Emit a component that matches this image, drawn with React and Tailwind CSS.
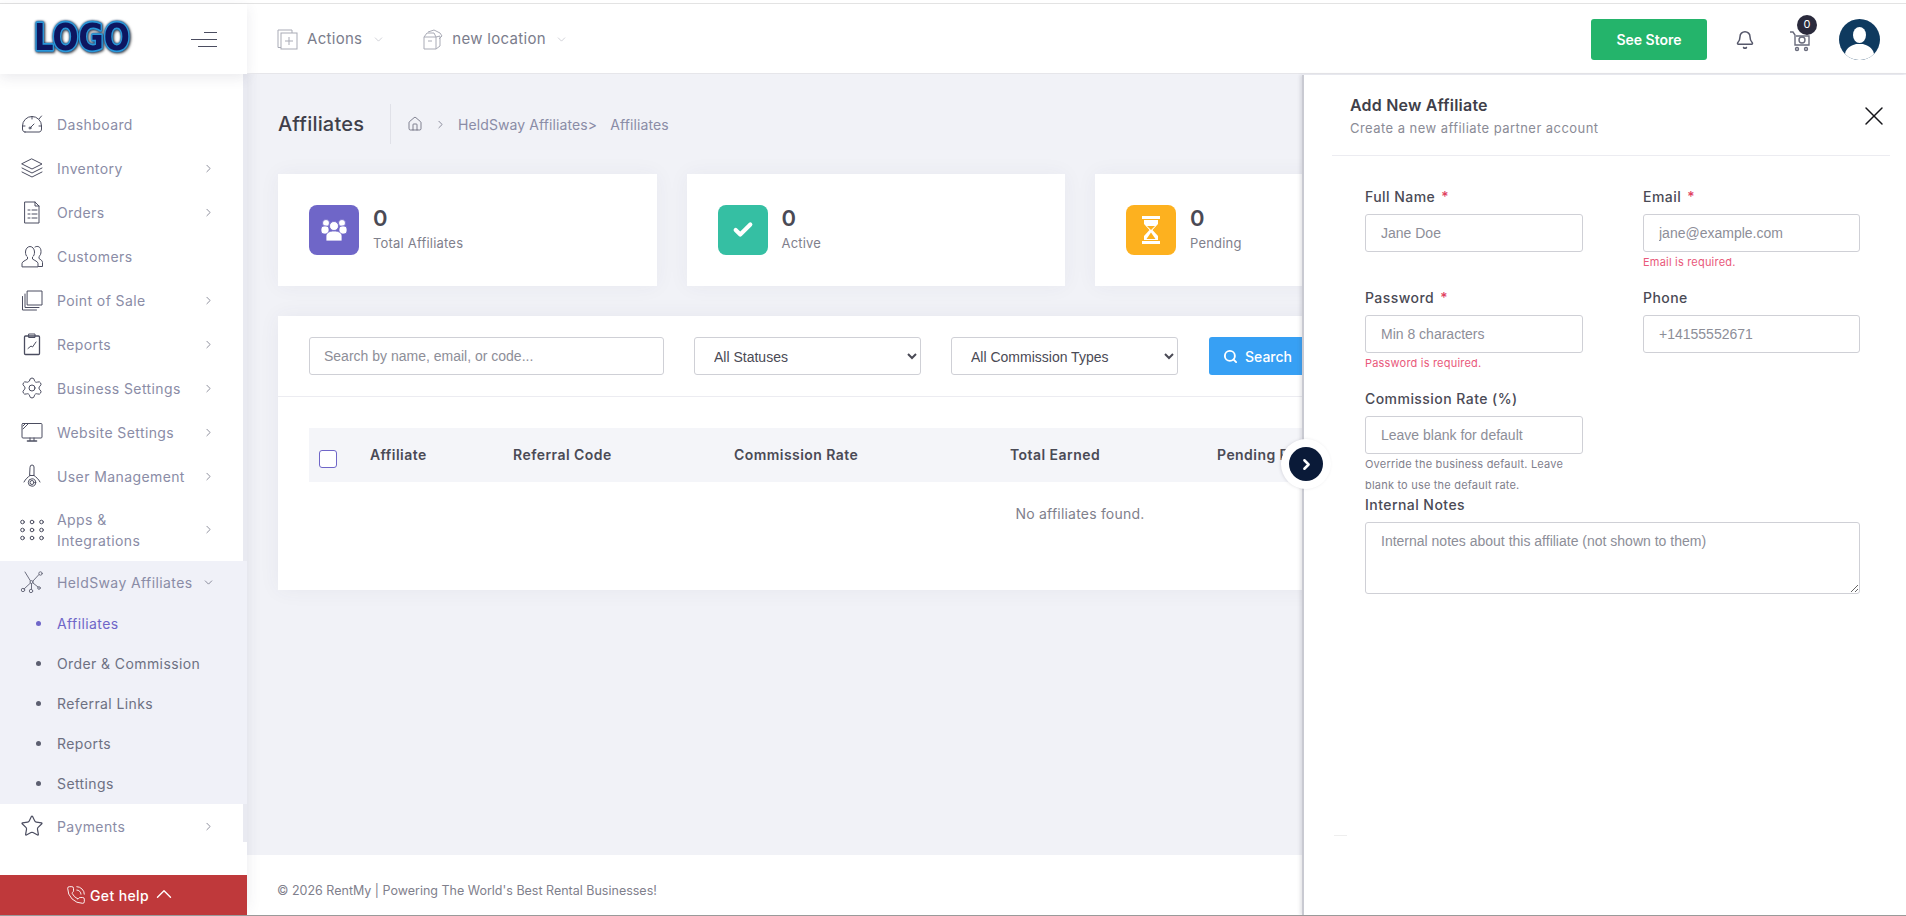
import React from "react";
import { ChevronRight, ChevronDown, ChevronUp, Bell, Search, Settings, Star, X, Home, Check, PhoneCall } from "lucide-react";

const Ic = ({ children, className = "" }) => (
  <svg viewBox="0 0 24 24" fill="none" stroke="currentColor" strokeWidth="1" strokeLinejoin="round" strokeLinecap="round" className={"w-[24px] h-[24px] text-[#4b4d60] " + className}>
    {children}
  </svg>
);

const icons = {
  gauge: <Ic><path d="M5 20h14c1.5 0 2.5-1.2 2.5-3v-3A9.5 9.5 0 0 0 2.5 14v3c0 1.800 1 3 2.500 3z" /><path d="M10.500 15.500l3.500-3.500" /><circle cx="10" cy="16" r="1" /><path d="M19 7l2.500-3M2.500 14H5M19 14h2.500M12 4.500V7" /></Ic>,
  layers: <Ic><path d="M12 3l10 5-10 5L2 8z" /><path d="M2 12l10 5 10-5" /><path d="M2 16l10 5 10-5" /></Ic>,
  doc: <Ic><path d="M5 2h10l4 4v17H5z" /><path d="M15 2v4h4" /><path d="M8 10h2M12 10h5M8 14h2M12 14h5M8 18h2M12 18h5" /></Ic>,
  users: <Ic><path d="M2 22.500v-3c0-2 3.500-3 5.500-4.500v-2c-1.500-1-2-3-2-5 0-3 2-5.500 4.500-5.500s4.500 2.500 4.500 5.500c0 2-.5 4-2 5v2c2 1.500 5.500 2.500 5.500 4.500v3z" /><path d="M15 3c2.500-1.500 6-.5 6 4.500 0 2-.5 4-2 5v2c1.500 1 3.500 2 3.500 4v4h-4" /></Ic>,
  stack: <Ic><path d="M7.500 3H22v14H7.500z" /><path d="M5 6v13.500h14" /><path d="M2.500 8.500V22h14" /></Ic>,
  report: <Ic><rect x="4.500" y="4" width="15" height="18.500" rx="1" strokeWidth="1.300" /><path d="M9 2h6v3.500H9z" /><path d="M8 16.500l3-2.500 1.500 1 3.500-5" /></Ic>,
  gear: <Settings size={24} strokeWidth={1} className="text-[#4b4d60]" />,
  monitor: <Ic><rect x="2" y="3.500" width="20" height="14.500" rx="1" /><path d="M3 9l5-5M3 6l2-2" /><path d="M10 18v2.500M14 18v2.500" /><path d="M7.500 21h9" strokeWidth="1.600" /></Ic>,
  usergear: <Ic><path d="M10 3a2 2 0 0 1 4 0v8.500h-4z" /><circle cx="12" cy="18.500" r="2" /><circle cx="12" cy="18.500" r="3.700" /><path d="M4 18c1.500-3 4-5 6-6.500M20 18c-1.500-3-4-5-6-6.500" /></Ic>,
  grid: <Ic>{[4, 12, 20].map((y) => [2.500, 12, 21.500].map((x) => <circle key={x + "-" + y} cx={x} cy={y} r="1.800" />))}</Ic>,
  network: <Ic className="!text-[#6d6f80]"><circle cx="11.500" cy="12" r="1.500" /><circle cx="20.500" cy="3.500" r="1.700" /><circle cx="3" cy="20" r="1.700" /><circle cx="11" cy="21" r="1.700" /><circle cx="19" cy="18" r="1.300" /><path d="M5 2l5.500 9M13 11l6-6.500M10.500 13l-6.500 6M11.500 13.500v6M13 13l5 4" /></Ic>,
  star: <Star size={24} strokeWidth={1.200} className="text-[#4b4d60]" />,
};

const nav = [
  { label: "Dashboard", icon: "gauge" },
  { label: "Inventory", icon: "layers", more: true },
  { label: "Orders", icon: "doc", more: true },
  { label: "Customers", icon: "users" },
  { label: "Point of Sale", icon: "stack", more: true },
  { label: "Reports", icon: "report", more: true },
  { label: "Business Settings", icon: "gear", more: true },
  { label: "Website Settings", icon: "monitor", more: true },
  { label: "User Management", icon: "usergear", more: true },
];

const subNav = ["Affiliates", "Order & Commission", "Referral Links", "Reports", "Settings"];

function NavRow({ item }) {
  return (
    <div className="flex items-center h-[44px] pl-[20px] pr-[32px] relative">
      <span className="w-[37px] shrink-0 flex">{icons[item.icon]}</span>
      <span className="flex-1 text-[#8a8ca6]">{item.label}</span>
      {item.more && <ChevronRight size={13} strokeWidth={1.200} className="text-[#55576a]" />}
    </div>
  );
}

function Sidebar() {
  return (
    <aside className="w-[247px] shrink-0 h-full flex flex-col bg-white relative z-10 text-[14px] tracking-[0.4px] shadow-[0_-6px_14px_rgba(60,60,90,0.10)]">
      <div className="h-[768px] shrink-0 overflow-hidden pt-[28px] relative">
        <div className="absolute top-0 right-0 bottom-0 w-[4px] bg-[#e9eaf1]" />
        {nav.map((item) => (
          <NavRow key={item.label} item={item} />
        ))}
        <div className="flex items-center h-[63px] pl-[20px] pr-[32px] relative">
          <span className="w-[37px] shrink-0 flex">{icons.grid}</span>
          <span className="flex-1 text-[#8a8ca6] leading-[21px]">Apps &<br />Integrations</span>
          <ChevronRight size={13} strokeWidth={1.200} className="text-[#55576a]" />
        </div>
        <div className="bg-[#f0f1f8] h-[243px] relative">
          <div className="flex items-center h-[42px] pl-[20px] pr-[32px]">
            <span className="w-[37px] shrink-0 flex">{icons.network}</span>
            <span className="flex-1 text-[#8a8ca6] whitespace-nowrap">HeldSway Affiliates</span>
            <ChevronDown size={13} strokeWidth={1.200} className="text-[#55576a]" />
          </div>
          {subNav.map((s, i) => (
            <div key={s} className="flex items-center h-[40px] pl-[36px]">
              <span className={"w-[5px] h-[5px] rounded-full mr-[16px] " + (i === 0 ? "bg-[#6f66c8]" : "bg-[#5c5f70]")} />
              <span className={i === 0 ? "text-[#6f66c8]" : "text-[#6d7082]"}>{s}</span>
            </div>
          ))}
        </div>
        <NavRow item={{ label: "Payments", icon: "star", more: true }} />
      </div>
      <div className="h-[33px] shrink-0 bg-white" />
      <div className="h-[40px] shrink-0 bg-[#bf393b] flex items-center justify-center pr-[4px] text-white font-medium">
        <PhoneCall size={20} strokeWidth={1.100} className="mr-[4px]" />
        <span>Get help</span>
        <ChevronUp size={26} strokeWidth={1.300} className="ml-[2px] mb-[3px]" />
      </div>
    </aside>
  );
}

function Header() {
  return (
    <header className="h-[70px] shrink-0 flex items-center bg-white relative z-20">
      <div className="w-[247px] shrink-0 h-full flex items-center justify-between pl-[33px] pr-[30px] shadow-[0_4px_12px_rgba(60,60,90,0.10)]">
        <svg viewBox="0 0 98 36" className="w-[98px] h-[36px] mb-[4px] overflow-visible">
          <text x="1" y="31" textLength="96" lengthAdjust="spacingAndGlyphs" className="font-['DejaVu_Sans',sans-serif] font-bold text-[38px] [paint-order:stroke] [filter:drop-shadow(0_0_1px_#07336b)_drop-shadow(1px_1px_1px_#666)]" fill="#0d1660" stroke="#2a97d8" strokeWidth="3.400" strokeLinejoin="round">
            LOGO
          </text>
        </svg>
        <svg width="26" height="15" viewBox="0 0 26 15" fill="none" stroke="#4b4d60" strokeWidth="1">
          <path d="M13 .5h13M0 7.500h26M7 14.500h19" />
        </svg>
      </div>
      <div className="flex-1 h-full flex items-center justify-between pl-[30px] pr-[26px] pt-[2px] border-b border-[#e6e6ea]">
        <div className="flex items-center text-[15px] tracking-[0.3px] text-[#7b7d8c]">
          <svg width="21" height="21" viewBox="0 0 21 21" fill="none" stroke="#a9abb6" strokeWidth="1" className="mr-[9px]">
            <path d="M4 18.500H1V1h14v3" />
            <rect x="4" y="4" width="16" height="16" />
            <path d="M12 8v8M8 12h8" />
          </svg>
          <span>Actions</span>
          <ChevronDown size={13} strokeWidth={1} className="ml-[10px] text-[#a9abb6]" />
          <svg width="21" height="21" viewBox="0 0 21 21" fill="none" stroke="#a9abb6" strokeWidth="1" className="ml-[37px] mr-[9px]">
            <path d="M2 8h12v12H2z" />
            <path d="M14 20l4-3V7l-4 1M2 8l3-4h7l2 4" />
            <path d="M6 3l6-2 6 3 2 3-3 3M6 12h4" />
          </svg>
          <span>new location</span>
          <ChevronDown size={13} strokeWidth={1} className="ml-[9px] text-[#a9abb6]" />
        </div>
        <div className="flex items-center">
          <button className="w-[116px] h-[41px] rounded-[3px] bg-[#24b46b] text-white text-[14px] font-semibold">See Store</button>
          <Bell size={20} strokeWidth={1.800} className="ml-[28px] text-[#55576a]" />
          <div className="relative ml-[34px] w-[22px] h-[22px] mt-[2px]">
            <svg width="24" height="22" viewBox="0 0 24 22" fill="none" stroke="#6a6c7c" strokeWidth="1.400">
              <path d="M1 2h3l2 3v10h14V6H7" />
              <circle cx="8" cy="19" r="1.500" />
              <circle cx="17" cy="19" r="1.500" />
              <circle cx="13" cy="10" r="3" />
            </svg>
            <span className="absolute -top-[15px] left-[8px] w-[20px] h-[20px] rounded-full bg-[#2a2a3c] text-white text-[11px] flex items-center justify-center">0</span>
          </div>
          <svg width="41" height="41" viewBox="0 0 41 41" className="ml-[28px]">
            <circle cx="20.500" cy="20.500" r="20.500" fill="#0f3a5f" />
            <ellipse cx="20.500" cy="16" rx="6.500" ry="8" fill="#fff" />
            <path d="M6 35c1-7 8-9 11-10h7c3 1 10 3 11 10a20.500 20.500 0 0 1-29 0z" fill="#fff" />
          </svg>
        </div>
      </div>
    </header>
  );
}

function StatCard({ color, icon, label }) {
  return (
    <div className="bg-white h-[112px] flex items-center pl-[31px] shadow-[0_0_20px_rgba(60,60,100,0.05)]">
      <div className={"w-[50px] h-[50px] rounded-[8px] flex items-center justify-center text-white " + color}>{icon}</div>
      <div className="ml-[14px] mt-[-4px]">
        <div className="text-[22px] font-semibold leading-[30px] text-[#4a4a55]">0</div>
        <div className="text-[13px] leading-[20px] tracking-[0.2px] text-[#7f808c]">{label}</div>
      </div>
    </div>
  );
}

const GroupIcon = (
  <svg width="30" height="26" viewBox="0 0 30 26" fill="#fff" stroke="#6f66c8" strokeWidth="0.800">
    <circle cx="7" cy="6" r="3.500" />
    <circle cx="23" cy="6" r="3.500" />
    <rect x="2" y="9" width="8" height="8" rx="3" />
    <rect x="20" y="9" width="8" height="8" rx="3" />
    <circle cx="15" cy="9" r="4.500" />
    <path d="M7 24v-5c0-3 3-5 8-5s8 2 8 5v5z" />
  </svg>
);

const HourglassIcon = (
  <svg width="20" height="28" viewBox="0 0 20 28">
    <path d="M1 0h18v3H1zM1 25h18v3H1z" fill="#fff" />
    <path d="M3 4h14v4l-5.500 6 5.500 6v4H3v-4l5.500-6L3 8z" fill="#fff" />
    <path d="M6 10h8l-4 4zM10 16.500l4.500 6.500h-9z" fill="#fdb11f" />
  </svg>
);

function Main() {
  const head = [
    ["w-[143px]", "Affiliate"],
    ["w-[221px]", "Referral Code"],
    ["w-[276px]", "Commission Rate"],
    ["w-[207px]", "Total Earned"],
    ["w-[200px]", "Pending Payout"],
  ];
  return (
    <main className="flex-1 min-w-0 h-full flex flex-col bg-[#f1f2f7]">
      <div className="flex-1 pl-[31px] pr-[24px] pt-[30px] overflow-hidden">
        <div className="flex items-center h-[40px] mb-[30px]">
          <h1 className="text-[20px] font-medium tracking-[0.2px] text-[#3f3f4a] w-[112px]">Affiliates</h1>
          <div className="h-[40px] border-l border-[#e0e1e8] pl-[16px] flex items-center text-[14px] tracking-[0.1px] text-[#8a8ca6]">
            <Home size={16} strokeWidth={1.100} className="text-[#55576a]" />
            <ChevronRight size={13} strokeWidth={1.200} className="mx-[11px] text-[#55576a]" />
            <span>HeldSway Affiliates&gt;</span>
            <span className="ml-[13px]">Affiliates</span>
          </div>
        </div>
        <div className="grid grid-cols-4 gap-x-[30px]">
          <StatCard color="bg-[#6f66c8]" icon={GroupIcon} label="Total Affiliates" />
          <StatCard color="bg-[#35bfa3]" icon={<Check size={22} strokeWidth={4.500} />} label="Active" />
          <StatCard color="bg-[#fdb11f]" icon={HourglassIcon} label="Pending" />
          <StatCard color="bg-[#3b9ff2]" icon={<Check size={24} />} label="Paid" />
        </div>
        <div className="bg-white mt-[30px] h-[274px] shadow-[0_0_20px_rgba(60,60,100,0.06)]">
          <div className="flex items-center gap-x-[30px] h-[81px] pl-[31px] border-b border-[#ececf1] font-['Liberation_Sans',Arial,sans-serif] text-[14px]">
            <input placeholder="Search by name, email, or code..." className="w-[355px] h-[38px] px-[14px] border border-[#cfd0d6] rounded-[3px] placeholder:text-[#8d8e98]" />
            <select className="w-[227px] h-[38px] pl-[15px] pr-[4px] pt-[1px] border border-[#cfd0d6] rounded-[3px] text-[#4a4a55]">
              <option>All Statuses</option>
            </select>
            <select className="w-[227px] h-[38px] pl-[15px] pr-[4px] pt-[1px] border border-[#cfd0d6] rounded-[3px] text-[#4a4a55]">
              <option>All Commission Types</option>
            </select>
            <button className="w-[110px] h-[38px] ml-[1px] pl-[14px] rounded-[3px] bg-[#37a0f4] text-white font-['Inter',sans-serif] font-medium flex items-center">
              <Search size={15} strokeWidth={3} />
              <span className="ml-[7px]">Search</span>
            </button>
          </div>
          <div className="mx-[31px] mt-[31px] text-center">
            <div className="flex h-[54px] bg-[#f4f5f9] text-[14px] font-semibold tracking-[0.45px] text-[#4a4a55] pl-[61px] pb-[2px] items-center text-left relative">
              <input type="checkbox" className="appearance-none absolute left-[10px] top-[22px] w-[18px] h-[18px] rounded-[3px] border border-[#6f66c8] bg-white" />
              {head.map(([w, t]) => (
                <span key={t} className={w}>{t}</span>
              ))}
            </div>
            <p className="mt-[21px] text-[14px] tracking-[0.2px] text-[#7f808c]">No affiliates found.</p>
          </div>
        </div>
      </div>
      <footer className="h-[60px] shrink-0 bg-white pl-[30px] pt-[12px] flex items-center text-[12.5px] text-[#7f808c]">
        © 2026 RentMy | Powering The World's Best Rental Businesses!
      </footer>
    </main>
  );
}

function Field({ label, required, placeholder, error, help }) {
  return (
    <div>
      <label className="block h-[21px] leading-[21px] mb-[7px] text-[14px] font-medium tracking-[0.45px] text-[#4a4a55]">
        {label}
        {required && <span className="text-[#e0405f] ml-[6px]">*</span>}
      </label>
      <input placeholder={placeholder} className="w-full h-[38px] px-[15px] border border-[#cfd0d6] rounded-[3px] font-['Liberation_Sans',Arial,sans-serif] text-[14px] placeholder:text-[#8d8e98]" />
      {error && <p className="text-[11px] leading-[21px] tracking-[0.2px] text-[#e9597b]">{error}</p>}
      {help && <p className="text-[11px] leading-[21px] tracking-[0.2px] text-[#7f808c]">{help}</p>}
    </div>
  );
}

function Drawer() {
  return (
    <div className="absolute top-[75px] bottom-[1px] left-[1302px] right-0 z-30 bg-white border-l-[2px] border-[#c9cad2] shadow-[-2px_0_3px_rgba(80,80,100,0.15)]">
      <button className="absolute left-[-23px] top-[364px] w-[50px] h-[50px] rounded-full bg-white flex items-center justify-center shadow-[-1px_0_3px_rgba(80,80,100,0.15)]">
        <span className="w-[34px] h-[34px] rounded-full bg-[#0a1a38] text-white flex items-center justify-center">
          <ChevronRight size={17} strokeWidth={3.500} />
        </span>
      </button>
      <div className="ml-[28px] mr-[16px] h-[81px] border-b border-[#ececf1] pl-[18px] pr-[8px] pt-[18px] flex justify-between">
        <div>
          <h2 className="text-[16px] font-semibold leading-[24px] tracking-[0.2px] text-[#3f3f4a]">Add New Affiliate</h2>
          <p className="text-[13px] leading-[20px] mt-[1px] tracking-[0.45px] text-[#8a8b96]">Create a new affiliate partner account</p>
        </div>
        <X size={32} strokeWidth={1.100} className="mt-[7px] -mr-[8px] text-[#15151a]" />
      </div>
      <div className="pl-[61px] pr-[46px] pt-[30px]">
        <div className="grid grid-cols-[218px_217px] gap-x-[60px] gap-y-[14px]">
          <Field label="Full Name" required placeholder="Jane Doe" />
          <Field label="Email" required placeholder="jane@example.com" error="Email is required." />
          <Field label="Password" required placeholder="Min 8 characters" error="Password is required." />
          <Field label="Phone" placeholder="+14155552671" />
          <Field label="Commission Rate (%)" placeholder="Leave blank for default" help="Override the business default. Leave blank to use the default rate." />
        </div>
        <label className="block h-[21px] leading-[21px] -mt-[2px] mb-[7px] text-[14px] font-medium tracking-[0.45px] text-[#4a4a55]">Internal Notes</label>
        <textarea placeholder="Internal notes about this affiliate (not shown to them)" className="block w-[495px] h-[72px] px-[15px] py-[8px] border border-[#cfd0d6] rounded-[3px] font-['Liberation_Sans',Arial,sans-serif] text-[14px] placeholder:text-[#8d8e98]" />
      </div>
      <div className="absolute left-[30px] top-[760px] w-[13px] h-px bg-[#eeeeee]" />
    </div>
  );
}

export default function App() {
  return (
    <div className="h-screen w-full relative overflow-hidden flex flex-col bg-white font-['Inter',sans-serif]">
      <div className="h-[4px] shrink-0 border-b border-[#e3e3e3]" />
      <Header />
      <div className="flex-1 min-h-0 flex">
        <Sidebar />
        <Main />
      </div>
      <div className="h-px shrink-0 bg-[#9a9a9a] relative z-40" />
      <Drawer />
    </div>
  );
}
